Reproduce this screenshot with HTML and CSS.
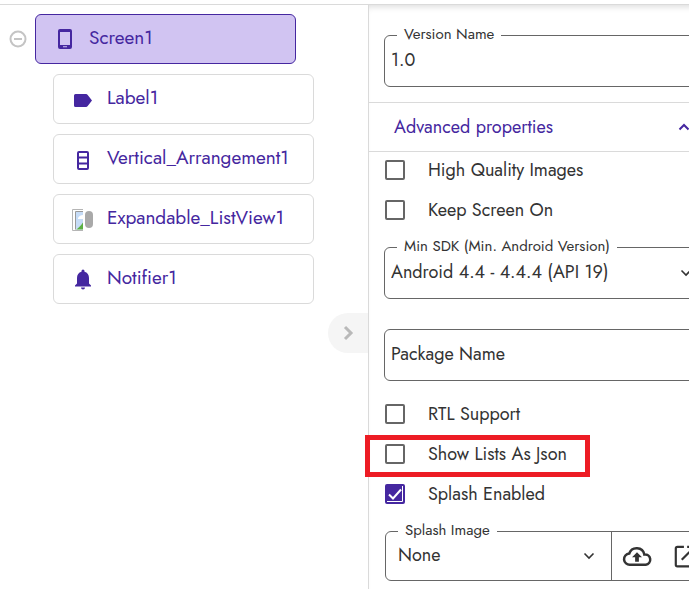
FILE: index.html
```html
<!DOCTYPE html>
<html lang="en">
<head>
<meta charset="UTF-8" />
<meta name="viewport" content="width=device-width, initial-scale=1" />
<title>Screen1 - Designer</title>
<link rel="stylesheet" href="styles.css">
</head>
<body>

<div class="topbar"></div>

<div class="designer">
  <nav class="tree">
    <div class="tree-root">
      <button class="toggle" aria-label="Collapse Screen1">
        <svg width="18" height="18" viewBox="0 0 18 18" fill="none" stroke="#c4c4c4" stroke-width="2">
          <circle cx="9" cy="9" r="7.5" />
          <path d="M5 9h8" />
        </svg>
      </button>
      <button class="node selected">
        <svg class="node-icon" viewBox="0 0 24 24" fill="#4527a0">
          <path fill-rule="evenodd" d="M7 1h10a2 2 0 0 1 2 2v16a2 2 0 0 1-2 2H7a2 2 0 0 1-2-2V3a2 2 0 0 1 2-2zM7 4v13h10V4zM10 18.300v1h4v-1z" />
        </svg>
        Screen1
      </button>
    </div>

    <div class="tree-children">
      <button class="node">
        <svg class="node-icon" viewBox="0 0 24 24" fill="#4527a0">
          <path d="M4.500 6H15c.7 0 1.300.3 1.700.9L21 12.500l-4.300 5.600c-.4.6-1 .9-1.700.9H4.500A1.500 1.500 0 0 1 3 17.500v-10A1.500 1.500 0 0 1 4.500 6z" />
        </svg>
        Label1
      </button>
      <button class="node">
        <svg class="node-icon" viewBox="0 0 24 24" fill="none" stroke="#4527a0" stroke-width="2">
          <rect x="7" y="4" width="10" height="17" rx="1" />
          <path d="M7 9.500h10M7 15.500h10" />
        </svg>
        Vertical_Arrangement1
      </button>
      <button class="node">
        <svg class="node-icon" viewBox="0 0 24 24">
          <path d="M12 1.500H1.500v21H12" fill="none" stroke="#b5b5b5" />
          <path d="M4.500 3.500H12V21.500H4.500z" fill="#c6dcf7" />
          <path d="M7 10c1-2 3-3 5-3v4H7z" fill="#fff" />
          <path d="M5 21.500c2-1 5-4 7-7v7z" fill="#5cb043" />
          <path d="M12 3.500H4.500V21.500" fill="none" stroke="#999" />
          <rect x="14" y="3" width="8" height="17" rx="4" fill="#a9a9a9" />
        </svg>
        Expandable_ListView1
      </button>
      <button class="node">
        <svg class="node-icon" viewBox="0 0 24 24" fill="#4527a0">
          <path d="M12 21.500a2 2 0 0 0 2-2h-4a2 2 0 0 0 2 2zM18 15.500v-5.500c0-3.200-1.600-5.600-4.500-6.300V3a1.500 1.500 0 0 0-3 0v.7C7.600 4.400 6 6.800 6 10v5.500L4 17.500v1h16v-1z" />
        </svg>
        Notifier1
      </button>
    </div>

    <button class="drawer-handle" aria-label="Hide panel">
      <svg width="12" height="16" viewBox="0 0 12 16" fill="none" stroke="#b9b9b9" stroke-width="3">
        <path d="M2 2l6 6-6 6" />
      </svg>
    </button>
  </nav>

  <form class="properties">
    <div class="field">
      <label for="version-name">Version Name</label>
      <input id="version-name" type="text" value="1.0">
    </div>

    <button type="button" class="section">
      Advanced properties
      <svg width="12" height="8" viewBox="0 0 12 8" fill="none" stroke="#4527a0" stroke-width="2">
        <path d="M1.500 6.500l4.500-4.500 4.500 4.500" />
      </svg>
    </button>

    <div class="checks">
      <label class="check"><input type="checkbox">High Quality Images</label>
      <label class="check"><input type="checkbox">Keep Screen On</label>
    </div>

    <div class="field">
      <label for="min-sdk">Min SDK (Min. Android Version)</label>
      <select id="min-sdk">
        <option>Android 4.4 - 4.4.4 (API 19)</option>
      </select>
      <svg class="arrow" width="12" height="8" viewBox="0 0 12 8" fill="none" stroke="#333" stroke-width="1.600">
        <path d="M1.500 1.500l4.500 4.500 4.500-4.500" />
      </svg>
    </div>

    <div class="field">
      <input type="text" placeholder="Package Name" aria-label="Package Name">
    </div>

    <div class="checks">
      <label class="check"><input type="checkbox">RTL Support</label>
      <label class="check marked"><input type="checkbox">Show Lists As Json</label>
      <label class="check"><input type="checkbox" checked>Splash Enabled</label>
    </div>

    <div class="field asset">
      <label for="splash-image">Splash Image</label>
      <div class="asset-select">
        <select id="splash-image">
          <option>None</option>
        </select>
        <svg class="arrow" width="12" height="8" viewBox="0 0 12 8" fill="none" stroke="#333" stroke-width="1.600">
          <path d="M1.500 1.500l4.500 4.500 4.500-4.500" />
        </svg>
      </div>
      <button type="button" class="asset-button" aria-label="Upload">
        <svg width="30" height="30" viewBox="0 0 24 24" fill="none" stroke="#333" stroke-width="2">
          <path d="M19 19H6.500A4.500 4.500 0 0 1 5.800 10 6.300 6.300 0 0 1 17.900 10.800 4.100 4.100 0 0 1 19 19z" />
          <path d="M12 9l4 4h-2.500v3.500h-3V13H8z" fill="#333" stroke="none" />
        </svg>
      </button>
      <button type="button" class="asset-button" aria-label="Open">
        <svg width="26" height="26" viewBox="0 0 24 24" fill="none" stroke="#333" stroke-width="2">
          <path d="M11 3.500H5A1.500 1.500 0 0 0 3.500 5v15A1.500 1.500 0 0 0 5 21.500h14a1.500 1.500 0 0 0 1.500-1.500V13M14 3.500h7v7M21 3.500L9 15.500" />
        </svg>
      </button>
    </div>
  </form>
</div>

</body>
</html>
```

FILE: styles.css
```css
*, *::after {
  box-sizing: border-box;
}

body {
  margin: 0;
  min-height: 100vh;
  overflow: hidden;
  display: flex;
  flex-direction: column;
  font-family: Jost, Lato, sans-serif;
  font-size: 18px;
  color: #333;
  background: #fff;
}

button, input, select {
  font: inherit;
  color: inherit;
  margin: 0;
}

button {
  cursor: pointer;
}

.topbar {
  height: 5px;
  border-bottom: 1px solid #dadada;
}

.designer {
  flex: 1;
  display: flex;
}

/* component tree */
.tree {
  position: relative;
  flex: 0 0 368px;
  padding: 9px 54px 0 9px;
}

.tree-root {
  display: flex;
  align-items: center;
  gap: 8px;
  padding-right: 18px;
}

.toggle {
  display: flex;
  padding: 0;
  border: none;
  background: none;
}

.tree-children {
  display: flex;
  flex-direction: column;
  gap: 10px;
  padding: 10px 0 0 44px;
}

.node {
  flex: 1;
  display: flex;
  align-items: center;
  gap: 12px;
  min-height: 50px;
  padding: 0 17px 2px;
  border: 1px solid #dadada;
  border-radius: 6px;
  background: #fff;
  color: #4527a0;
  font-size: 19px;
  line-height: 24px;
  text-align: left;
}

.node.selected {
  border-color: #4527a0;
  background: #d1c4f2;
}

.node-icon {
  flex: none;
  width: 24px;
  height: 24px;
  margin-top: 3px;
}

.drawer-handle {
  position: absolute;
  right: 0;
  top: 308px;
  width: 40px;
  height: 40px;
  display: flex;
  align-items: center;
  padding: 0 0 0 15px;
  border: none;
  border-radius: 20px 0 0 20px;
  background: #f5f5f5;
}

/* property panel, its right edge runs out of the window */
.properties {
  flex: 1;
  margin-right: -16px;
  padding-top: 30px;
  border-left: 1px solid #dadada;
  box-shadow: inset 0 6px 6px -4px #ddd;
}

.field {
  position: relative;
  display: flex;
  align-items: center;
  height: 52px;
  margin: 0 0 0 15px;
  border: 1px solid #666;
  border-radius: 6px;
}

.field + .field {
  margin-top: 30px;
}

.field > label {
  position: absolute;
  top: -12px;
  left: 12px;
  padding: 0 7px;
  background: #fff;
  font-size: 15px;
  line-height: 20px;
}

.field input,
.field select {
  flex: 1;
  min-width: 0;
  height: 100%;
  padding: 0 6px 2px;
  border: none;
  outline: none;
  appearance: none;
  background: none;
}

.field input::placeholder {
  color: #333;
  opacity: 1;
}

.arrow {
  flex: none;
  margin-right: 16px;
}

.section {
  display: flex;
  align-items: center;
  justify-content: space-between;
  width: 100%;
  height: 50px;
  margin-top: 15px;
  padding: 0 19px 0 25px;
  border: 1px solid #dadada;
  border-width: 1px 0;
  background: none;
  color: #4527a0;
}

.checks {
  padding: 13px 0 12px;
}

.section + .checks {
  margin-top: -2px;
  padding: 0 0 17px;
}

.check {
  display: flex;
  align-items: center;
  gap: 23px;
  height: 40px;
  padding-left: 16px;
}

.check input {
  appearance: none;
  width: 20px;
  height: 20px;
  border: 2px solid #666;
  border-radius: 2px;
}

.check input:checked {
  border-color: #4527a0;
  background: #4527a0 url("data:image/svg+xml,%3Csvg xmlns='http://www.w3.org/2000/svg' viewBox='0 0 16 16' fill='none' stroke='white'%3E%3Cpath d='M2 8.500l4 4 8-9' stroke-width='2'/%3E%3Cpath d='M0 15.500h15.500V0'/%3E%3C/svg%3E");
}

.marked {
  position: relative;
}

.marked::after {
  content: "";
  position: absolute;
  top: 1px;
  left: -4px;
  width: 225px;
  height: 42px;
  border: 5px solid #ed1c24;
}

.asset {
  height: 50px;
  margin: 5px 0 0 16px;
}

.asset-select {
  flex: 0 0 226px;
  display: flex;
  align-items: center;
  height: 50px;
  padding-left: 6px;
  border-right: 1px solid #666;
}

.asset-button {
  display: flex;
  padding: 0 10px;
  border: none;
  background: none;
}
```
